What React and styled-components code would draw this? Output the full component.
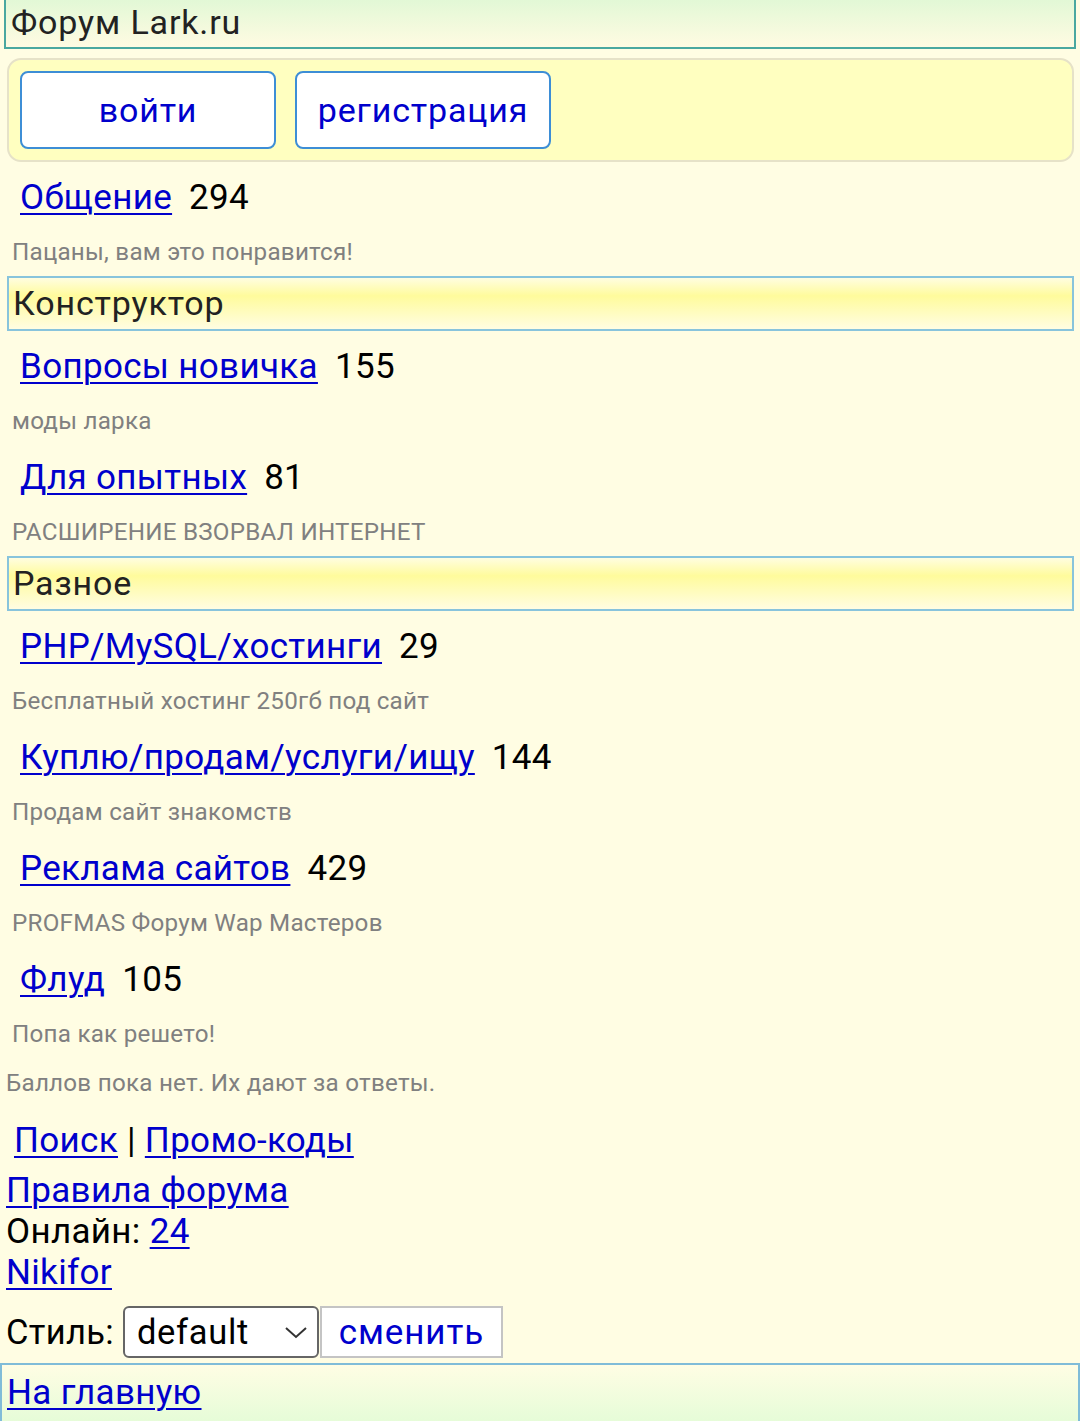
import React from "react";
import styled, { createGlobalStyle } from "styled-components";

const GlobalStyle = createGlobalStyle`
	body {
		margin: 0;
		background: #fffde3;
		font-family: Roboto, "Noto Sans", "Liberation Sans", sans-serif;
		letter-spacing: 0.02em;
	}
`;

const Page = styled.div`
	display: flex;
	flex-direction: column;
	min-height: 1421px;
	overflow: hidden;
`;

const Header = styled.div`
	margin: 0 4px;
	height: 47px;
	border: 2px solid #4aa8a0;
	border-top: none;
	background: linear-gradient(#e2f8d6, #fffbe2);
	color: #222;
	font-size: 34px;
	letter-spacing: 0.025em;
	line-height: 44px;
	padding-left: 5px;
`;

const AuthBox = styled.div`
	margin: 9px 6px 0 7px;
	padding: 11px;
	display: flex;
	gap: 19px;
	background: #ffffc0;
	border: 2px solid #e6e2c8;
	border-radius: 14px;
`;

const AuthButton = styled.button`
	width: 256px;
	height: 78px;
	background: #fff;
	border: 2px solid #3d8ed6;
	border-radius: 8px;
	color: #0000cc;
	font-family: inherit;
	font-size: 34px;
	letter-spacing: 0.025em;
	cursor: pointer;
`;

const Item = styled.div`
	padding: 16px 12px 6px;
`;

const Title = styled.div`
	line-height: 40px;
	font-size: 35px;
	padding-left: 8px;
	white-space: nowrap;
`;

const Link = styled.a`
	color: #0000cc;
	text-decoration: underline;
	text-decoration-thickness: 2px;
	text-underline-offset: 4px;
`;

const Count = styled.span`
	margin-left: 17px;
	color: #000;
`;

const Desc = styled.div`
	margin-top: 19px;
	line-height: 30px;
	font-size: 24.2px;
	letter-spacing: 0.01em;
	color: #808080;
`;

const Section = styled.div`
	margin: 3px 6px 0 7px;
	height: 51px;
	border: 2px solid #88c4dc;
	background: linear-gradient(#fffde0 0%, #fffb9c 35%, #fffde2 100%);
	color: #222;
	font-size: 34px;
	letter-spacing: 0.025em;
	line-height: 51px;
	padding-left: 4px;
`;

const Note = styled.div`
	margin: 13px 0 0 6px;
	line-height: 30px;
	font-size: 24.2px;
	letter-spacing: 0.01em;
	color: #808080;
`;

const FooterLine = styled.div`
	margin-left: ${(p) => p.$indent || 6}px;
	margin-top: ${(p) => p.$top || 0}px;
	line-height: 41px;
	font-size: 35px;
	color: #000;
`;

const StyleRow = styled.div`
	display: flex;
	align-items: center;
	margin: 13px 0 0 6px;
	font-size: 34.5px;
	color: #000;
`;

const SelectWrap = styled.div`
	position: relative;
	margin-left: 9px;
	width: 196px;
	height: 52px;
`;

const Select = styled.select`
	appearance: none;
	width: 100%;
	height: 100%;
	box-sizing: border-box;
	background: #fff;
	border: 2px solid #666;
	border-radius: 6px;
	padding-left: 12px;
	font-family: inherit;
	font-size: 34.5px;
	letter-spacing: 0.02em;
	color: #000;
`;

const Chevron = styled.svg`
	position: absolute;
	right: 12px;
	top: 21px;
	pointer-events: none;
`;

const ChangeButton = styled.button`
	width: 183px;
	height: 52px;
	background: #fff;
	border: 2px solid #c4c4c4;
	border-radius: 0;
	color: #0000cc;
	font-family: inherit;
	font-size: 35px;
	letter-spacing: 0.025em;
	padding: 0;
	margin-left: 1px;
`;

const Footer = styled.div`
	margin-top: 5px;
	height: 56px;
	border: 2px solid #80bcd8;
	background: linear-gradient(#fffde4, #e6fcd8);
	font-size: 35px;
	line-height: 56px;
	padding-left: 5px;
`;

const groups = [
	{
		items: [{ title: "Общение", count: 294, desc: "Пацаны, вам это понравится!" }],
	},
	{
		name: "Конструктор",
		items: [
			{ title: "Вопросы новичка", count: 155, desc: "моды ларка" },
			{ title: "Для опытных", count: 81, desc: "РАСШИРЕНИЕ ВЗОРВАЛ ИНТЕРНЕТ" },
		],
	},
	{
		name: "Разное",
		items: [
			{ title: "PHP/MySQL/хостинги", count: 29, desc: "Бесплатный хостинг 250гб под сайт" },
			{ title: "Куплю/продам/услуги/ищу", count: 144, desc: "Продам сайт знакомств" },
			{ title: "Реклама сайтов", count: 429, desc: "PROFMAS Форум Wap Мастеров" },
			{ title: "Флуд", count: 105, desc: "Попа как решето!" },
		],
	},
];

const App = () => {
	return (
		<Page>
			<GlobalStyle />
			<Header>Форум Lark.ru</Header>
			<AuthBox>
				<AuthButton>войти</AuthButton>
				<AuthButton>регистрация</AuthButton>
			</AuthBox>
			{groups.map((group, gi) => (
				<React.Fragment key={gi}>
					{group.name && <Section>{group.name}</Section>}
					{group.items.map((item) => (
						<Item key={item.title}>
							<Title>
								<Link href="#">{item.title}</Link>
								<Count>{item.count}</Count>
							</Title>
							<Desc>{item.desc}</Desc>
						</Item>
					))}
				</React.Fragment>
			))}
			<Note>Баллов пока нет. Их дают за ответы.</Note>
			<FooterLine $indent={14} $top={22}>
				<Link href="#">Поиск</Link> | <Link href="#">Промо-коды</Link>
			</FooterLine>
			<FooterLine $top={9}>
				<Link href="#">Правила форума</Link>
			</FooterLine>
			<FooterLine>
				Онлайн: <Link href="#">24</Link>
			</FooterLine>
			<FooterLine>
				<Link href="#">Nikifor</Link>
			</FooterLine>
			<StyleRow>
				Стиль:
				<SelectWrap>
					<Select defaultValue="default">
						<option value="default">default</option>
					</Select>
					<Chevron width="22" height="12" viewBox="0 0 22 12">
						<path d="M1 1 L11 10 L21 1" fill="none" stroke="#333" strokeWidth="2" />
					</Chevron>
				</SelectWrap>
				<ChangeButton>сменить</ChangeButton>
			</StyleRow>
			<Footer>
				<Link href="#">На главную</Link>
			</Footer>
		</Page>
	);
};

export default App;
